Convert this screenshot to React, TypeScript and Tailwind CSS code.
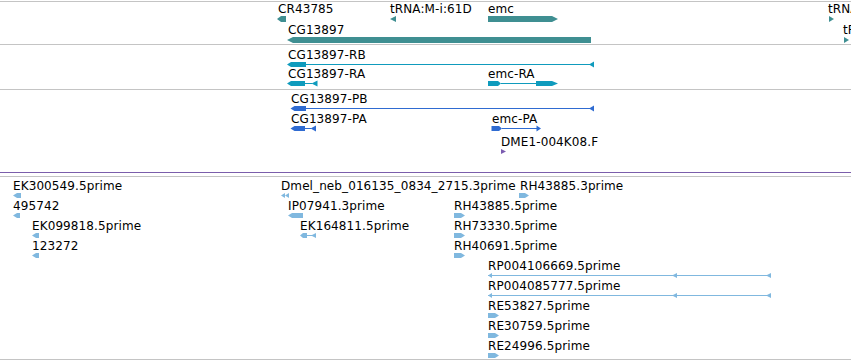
import React from 'react'

// polygon point strings for the feature glyphs (local coords)
const mid = (a: number, b: number) => (a + b) / 2

function arrowL(x: number, x2: number, y0: number, y1: number, tip = 4) {
  return `${x},${mid(y0, y1)} ${x + tip},${y0} ${x2},${y0} ${x2},${y1} ${x + tip},${y1}`
}
function arrowR(x: number, x2: number, y0: number, y1: number, tip = 4) {
  return `${x},${y0} ${x2 - tip},${y0} ${x2},${mid(y0, y1)} ${x2 - tip},${y1} ${x},${y1}`
}
function triL(x: number, x2: number, y0: number, y1: number) {
  return `${x},${mid(y0, y1)} ${x2},${y0} ${x2},${y1}`
}
function triR(x: number, x2: number, y0: number, y1: number) {
  return `${x},${y0} ${x2},${mid(y0, y1)} ${x},${y1}`
}

type FeatureProps = {
  pos: string
  label: string
  w: number
  color: string
  shift?: string
  children: React.ReactNode
}

// a feature on the track canvas: its label, with the glyph right under it
function Feature({ pos, label, w, color, shift = '', children }: FeatureProps) {
  return (
    <div className={`absolute top-0 flex flex-col ${pos}`}>
      <span className={`whitespace-nowrap text-black ${shift}`}>{label}</span>
      <svg width={w} height={6} className="overflow-visible">
        <g fill={color}>{children}</g>
      </svg>
    </div>
  )
}

function Divider() {
  return <div className="h-px w-full bg-[#c4c4c4]" />
}

const GENE = '#3f8f92'
const TX = '#0f9bbd'
const PROT = '#2f6bd1'
const EST = '#80b8df'

function GeneTrack() {
  return (
    <div className="flex h-[42px] flex-col">
      <div className="relative h-[21px]">
        <Feature pos="left-[277px]" shift="ml-[1px]" label="CR43785" w={9} color={GENE}>
          <polygon points={arrowL(0, 9, 0, 6, 4)} />
        </Feature>
        <Feature pos="left-[390px]" label="tRNA:M-i:61D" w={6} color={GENE}>
          <polygon points={triL(0, 6, 0, 6)} />
        </Feature>
        <Feature pos="left-[488px]" label="emc" w={70} color={GENE}>
          <polygon points={arrowR(0, 70, 0, 6, 6)} />
        </Feature>
        <Feature pos="left-[828px]" label="tRNA" w={6} color={GENE}>
          <polygon points={triR(1, 6, 0, 6)} />
        </Feature>
      </div>
      <div className="relative h-[21px]">
        <Feature pos="left-[287px]" shift="ml-[1px]" label="CG13897" w={304} color={GENE}>
          <polygon points={arrowL(0, 304, 0, 6, 6)} />
        </Feature>
        <Feature pos="left-[843px]" label="tRNA" w={6} color={GENE}>
          <polygon points={triR(1, 6, 0, 6)} />
        </Feature>
      </div>
    </div>
  )
}

function TranscriptTrack() {
  return (
    <div className="flex h-[44px] flex-col pt-[3px]">
      <div className="relative h-[19px]">
        <Feature pos="left-[287px]" shift="ml-[1px]" label="CG13897-RB" w={307} color={TX}>
          <polygon points={arrowL(0, 19, 0, 5, 4)} />
          <rect x={19} y={2} width={285} height={1} />
          <polygon points={triL(302, 307, -0.5, 5.5)} />
        </Feature>
      </div>
      <div className="relative h-[20px]">
        <Feature pos="left-[287px]" shift="ml-[1px]" label="CG13897-RA" w={31} color={TX}>
          <polygon points={arrowL(0, 18, 0, 5, 4)} />
          <rect x={18} y={2} width={7} height={1} />
          <polygon points={triL(24.5, 30.5, -0.5, 5.5)} />
        </Feature>
        <Feature pos="left-[488px]" label="emc-RA" w={70} color={TX}>
          <polygon points={arrowR(0, 13, 0, 5, 3)} />
          <rect x={13} y={2} width={35} height={1} />
          <polygon points={arrowR(48, 70, 0, 5, 6)} />
        </Feature>
      </div>
    </div>
  )
}

function ProteinTrack() {
  return (
    <div className="flex h-[82px] flex-col pt-[2px]">
      <div className="relative h-[20px]">
        <Feature pos="left-[290px]" shift="ml-[1px]" label="CG13897-PB" w={304} color={PROT}>
          <polygon points={arrowL(0.5, 16, 0, 5, 4)} />
          <rect x={16} y={2} width={285} height={1} />
          <polygon points={triL(299, 304, -0.5, 5.5)} />
        </Feature>
      </div>
      <div className="relative h-[20px]">
        <Feature pos="left-[290px]" shift="ml-[1px]" label="CG13897-PA" w={26} color={PROT}>
          <polygon points={arrowL(0.5, 15, 0, 5, 4)} />
          <rect x={15} y={2} width={6} height={1} />
          <polygon points={triL(20.5, 26, -0.5, 5.5)} />
        </Feature>
        <Feature pos="left-[491px]" shift="ml-[1px]" label="emc-PA" w={50} color={PROT}>
          <polygon points={arrowR(0.5, 11, 0, 5, 3)} />
          <rect x={11} y={2} width={35} height={1} />
          <polygon points={triR(45.5, 50, -0.5, 5.5)} />
        </Feature>
      </div>
      <div className="relative mt-[3px] h-[20px]">
        <Feature pos="left-[501px]" label="DME1-004K08.F" w={5} color="#7b5cb0">
          <polygon points={triR(0, 5, 0, 5)} />
        </Feature>
      </div>
    </div>
  )
}

function RpGlyph() {
  return (
    <>
      <rect x={0} y={2} width={283} height={1} />
      <polygon points={triL(0, 4, 0, 5)} />
      <polygon points={triL(184, 189, 0, 5)} />
      <polygon points={triL(278, 283, 0, 5)} />
    </>
  )
}

function EstTrack() {
  return (
    <div className="flex h-[182px] flex-col pt-[2px]">
      <div className="relative h-[20px]">
        <Feature pos="left-[13px]" label="EK300549.5prime" w={8} color={EST}>
          <polygon points={arrowL(0, 8, 0, 5, 4)} />
        </Feature>
        <Feature pos="left-[281px]" label="Dmel_neb_016135_0834_2715.3prime" w={8} color={EST}>
          <polygon points={triL(0, 4, 0, 5)} />
          <polygon points={triL(4, 8, 0, 5)} />
        </Feature>
        <Feature pos="left-[519px]" shift="ml-[1px]" label="RH43885.3prime" w={10} color={EST}>
          <polygon points={arrowR(0, 10, 0, 5, 4)} />
        </Feature>
      </div>
      <div className="relative h-[20px]">
        <Feature pos="left-[13px]" label="495742" w={7} color={EST}>
          <polygon points={arrowL(0, 7, 0, 5, 4)} />
        </Feature>
        <Feature pos="left-[288px]" label="IP07941.3prime" w={15} color={EST}>
          <polygon points={arrowL(0, 15, 0, 5, 4)} />
        </Feature>
        <Feature pos="left-[454px]" label="RH43885.5prime" w={11} color={EST}>
          <polygon points={arrowR(0, 11, 0, 5, 4)} />
        </Feature>
      </div>
      <div className="relative h-[20px]">
        <Feature pos="left-[32px]" label="EK099818.5prime" w={7} color={EST}>
          <polygon points={arrowL(0, 7, 0, 5, 4)} />
        </Feature>
        <Feature pos="left-[300px]" label="EK164811.5prime" w={16} color={EST}>
          <polygon points={arrowL(0, 7, 0, 5, 3)} />
          <rect x={7} y={2} width={5} height={1} />
          <polygon points={triL(11, 16, 0, 5)} />
        </Feature>
        <Feature pos="left-[454px]" label="RH73330.5prime" w={11} color={EST}>
          <polygon points={arrowR(0, 11, 0, 5, 4)} />
        </Feature>
      </div>
      <div className="relative h-[20px]">
        <Feature pos="left-[32px]" label="123272" w={7} color={EST}>
          <polygon points={arrowL(0, 7, 0, 5, 4)} />
        </Feature>
        <Feature pos="left-[454px]" label="RH40691.5prime" w={11} color={EST}>
          <polygon points={arrowR(0, 11, 0, 5, 4)} />
        </Feature>
      </div>
      <div className="relative h-[20px]">
        <Feature pos="left-[488px]" label="RP004106669.5prime" w={283} color={EST}>
          <RpGlyph />
        </Feature>
      </div>
      <div className="relative h-[20px]">
        <Feature pos="left-[488px]" label="RP004085777.5prime" w={283} color={EST}>
          <RpGlyph />
        </Feature>
      </div>
      {['RE53827.5prime', 'RE30759.5prime', 'RE24996.5prime'].map((name) => (
        <div key={name} className="relative h-[20px]">
          <Feature pos="left-[488px]" label={name} w={11} color={EST}>
            <polygon points={arrowR(0, 11, 0, 5, 4)} />
          </Feature>
        </div>
      ))}
    </div>
  )
}

export default function App() {
  return (
    <div className="flex h-[361px] w-[851px] flex-col overflow-hidden bg-white pt-px font-['DejaVu_Sans',sans-serif] text-[12px] leading-[14px] tracking-[0.1px]">
      <Divider />
      <GeneTrack />
      <Divider />
      <TranscriptTrack />
      <Divider />
      <ProteinTrack />
      <div className="h-px w-full bg-[#7b5eab]" />
      <div className="h-[3px] shrink-0" />
      <Divider />
      <EstTrack />
      <Divider />
    </div>
  )
}
